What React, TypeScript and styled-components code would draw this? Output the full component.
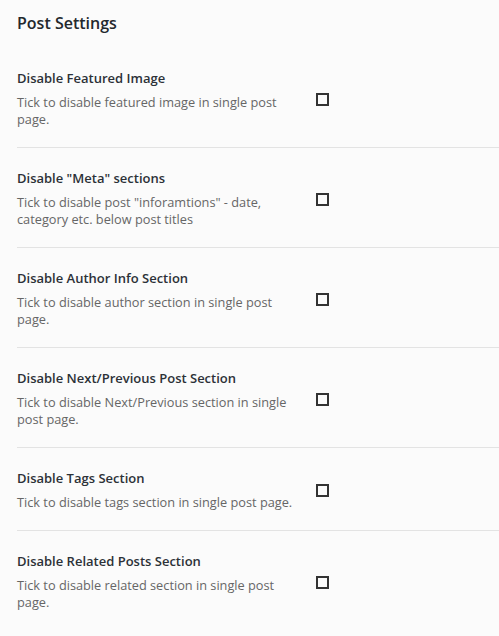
import React from 'react';
import styled, { createGlobalStyle } from 'styled-components';

const settings = [
  {
    id: 'featured',
    title: 'Disable Featured Image',
    desc: 'Tick to disable featured image in single post page.',
  },
  {
    id: 'meta',
    title: 'Disable "Meta" sections',
    desc: 'Tick to disable post "inforamtions" - date, category etc. below post titles',
  },
  {
    id: 'author',
    title: 'Disable Author Info Section',
    desc: 'Tick to disable author section in single post page.',
  },
  {
    id: 'nav',
    title: 'Disable Next/Previous Post Section',
    desc: 'Tick to disable Next/Previous section in single post page.',
  },
  {
    id: 'tags',
    title: 'Disable Tags Section',
    desc: 'Tick to disable tags section in single post page.',
  },
  {
    id: 'related',
    title: 'Disable Related Posts Section',
    desc: 'Tick to disable related section in single post page.',
  },
];

const App: React.FC = () => {
  return (
    <>
      <GlobalStyle />
      <StyledPage>
        <StyledHeading>Post Settings</StyledHeading>
        <StyledList>
          {settings.map((s) => (
            <StyledRow key={s.id}>
              <StyledText>
                <StyledLabel htmlFor={s.id}>{s.title}</StyledLabel>
                <StyledDesc>{s.desc}</StyledDesc>
              </StyledText>
              <StyledCheckbox id={s.id} type="checkbox" />
            </StyledRow>
          ))}
        </StyledList>
      </StyledPage>
    </>
  );
};

const GlobalStyle = createGlobalStyle`
  html, body {
    margin: 0;
    padding: 0;
    background: #fbfbfb;
  }
  body {
    font-family: "Open Sans", "Noto Sans", "Liberation Sans", sans-serif;
    color: #23282d;
  }
`;

const StyledPage = styled.div`
  padding: 12px 0 0 17px;
`;

const StyledHeading = styled.h2`
  margin: 0;
  font-size: 16px;
  line-height: 22px;
  font-weight: 600;
  color: #23282d;
`;

const StyledList = styled.div`
  display: flex;
  flex-direction: column;
  margin-top: 14px;
`;

const StyledRow = styled.div`
  display: flex;
  align-items: center;
  padding: 22px 0 19px;
  & + & {
    border-top: 1px solid #e3e3e3;
  }
`;

const StyledText = styled.div`
  display: flex;
  flex-direction: column;
  width: 282px;
  margin-right: 17px;
`;

const StyledLabel = styled.label`
  font-size: 13px;
  line-height: 17px;
  font-weight: 600;
  color: #2c3137;
`;

const StyledDesc = styled.p`
  margin: 7px 0 0;
  font-size: 12.75px;
  line-height: 17px;
  color: #666;
`;

const StyledCheckbox = styled.input`
  appearance: none;
  margin: 0;
  flex: none;
  width: 13px;
  height: 13px;
  border: 2px solid #333;
  background: transparent;
`;

export default App;
